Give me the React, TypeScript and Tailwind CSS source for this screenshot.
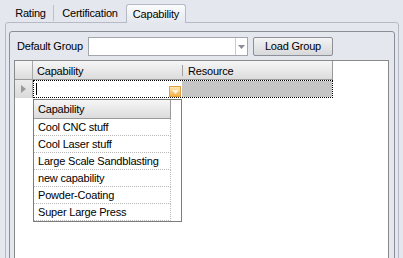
const capabilities = [
  "Cool CNC stuff",
  "Cool Laser stuff",
  "Large Scale Sandblasting",
  "new capability",
  "Powder-Coating",
  "Super Large Press",
];

function DropArrow({ className }: { className?: string }) {
  return (
    <svg width="7" height="4" viewBox="0 0 7 4" className={className}>
      <path d="M0 0h7L3.5 4z" fill="currentColor" />
    </svg>
  );
}

export default function App() {
  return (
    <div className="w-[403px] h-[258px] overflow-hidden bg-[#e4e7ee] font-['Liberation_Sans',Arial,sans-serif] text-[11px] leading-[13px] tracking-[-0.2px] text-black">
      {/* tab strip */}
      <div className="flex h-[22px] items-end pl-[8px]">
        <div className="flex h-[18px] w-[45px] items-center justify-center">Rating</div>
        <div className="mb-[1px] h-[16px] w-px bg-[#bcc1ca]" />
        <div className="flex h-[18px] w-[72px] items-center justify-center">Certification</div>
        <div className="relative z-10 mb-[-1px] flex h-[19px] w-[60px] items-center justify-center rounded-t-[3px] border border-b-0 border-[#b5bac4] bg-gradient-to-b from-[#fbfcfd] to-[#e4e7ee]">
          Capability
        </div>
      </div>

      {/* tab page */}
      <div className="ml-[5px] h-[240px] w-[394px] rounded-t-[3px] border border-[#b5bac4] px-[3px] pt-[8px]">
        {/* group box */}
        <div className="h-[230px] rounded-[3px] border border-[#8b8f97] pt-[5px]">
          <div className="flex h-[19px] items-center pl-[7px]">
            <div className="w-[71px]">Default Group</div>
            <div className="flex h-[19px] w-[160px] border border-[#a3a6ad] bg-white">
              <div className="flex-1" />
              <div className="flex w-[12px] items-center justify-center border-l border-[#c9ccd2] text-[#8a8d93]">
                <DropArrow />
              </div>
            </div>
            <button className="ml-[5px] flex h-[19px] w-[80px] items-center justify-center rounded-[2px] border border-[#8d9096] bg-gradient-to-b from-[#f3f3f3] to-[#d8d9db]">
              Load Group
            </button>
          </div>

          {/* grid */}
          <div className="relative ml-[4px] mt-[4px] h-[200px] w-[375px] border border-[#8a8a8a] bg-white">
            <div className="flex h-[19px] w-[318px] border-b border-r border-[#9a9a9a] bg-gradient-to-b from-[#f6f6f6] to-[#dcdcdc]">
              <div className="w-[18px] border-r border-[#a8a8a8]" />
              <div className="relative flex w-[150px] items-center pl-[4px] pt-[3px]">
                Capability
                <div className="absolute right-0 top-[4px] h-[11px] w-px bg-[#a0a0a0]" />
              </div>
              <div className="flex flex-1 items-center pl-[5px] pt-[3px]">Resource</div>
            </div>
            <div className="flex h-[18px]">
              <div className="flex w-[18px] items-center justify-center border-r border-[#a8a8a8] bg-gradient-to-b from-[#ececec] to-[#dadada]">
                <svg width="5" height="8" viewBox="0 0 5 8">
                  <path d="M0 0l5 4-5 4z" fill="#9a9a9a" />
                </svg>
              </div>
              <div className="flex w-[300px] border border-dotted border-black">
                <div className="flex w-[148px] items-center bg-white">
                  <div className="ml-[2px] h-[12px] w-px bg-black" />
                  <div className="flex-1" />
                  <div className="mr-[1px] mt-[5px] flex h-[11px] w-[12px] items-center justify-center border border-[#e1a043] bg-gradient-to-b from-[#fde7b0] to-[#f4b041] text-[#fff7e6]">
                    <DropArrow />
                  </div>
                </div>
                <div className="flex-1 bg-[#c5c5c5]" />
              </div>
            </div>

            {/* dropdown list */}
            <div className="absolute left-[18px] top-[38px] z-20 flex h-[123px] w-[149px] border border-[#7d7d7d] bg-white">
              <div className="w-[137px]">
                <div className="flex h-[19px] items-center border-b border-r border-[#9a9a9a] bg-gradient-to-b from-[#f6f6f6] to-[#dcdcdc] pl-[4px]">
                  Capability
                </div>
                {capabilities.map((c) => (
                  <div
                    key={c}
                    className="flex h-[17px] items-center border-b border-r border-dotted border-[#b8b8b8] pl-[4px]"
                  >
                    {c}
                  </div>
                ))}
              </div>
            </div>
          </div>
        </div>
      </div>
    </div>
  );
}
